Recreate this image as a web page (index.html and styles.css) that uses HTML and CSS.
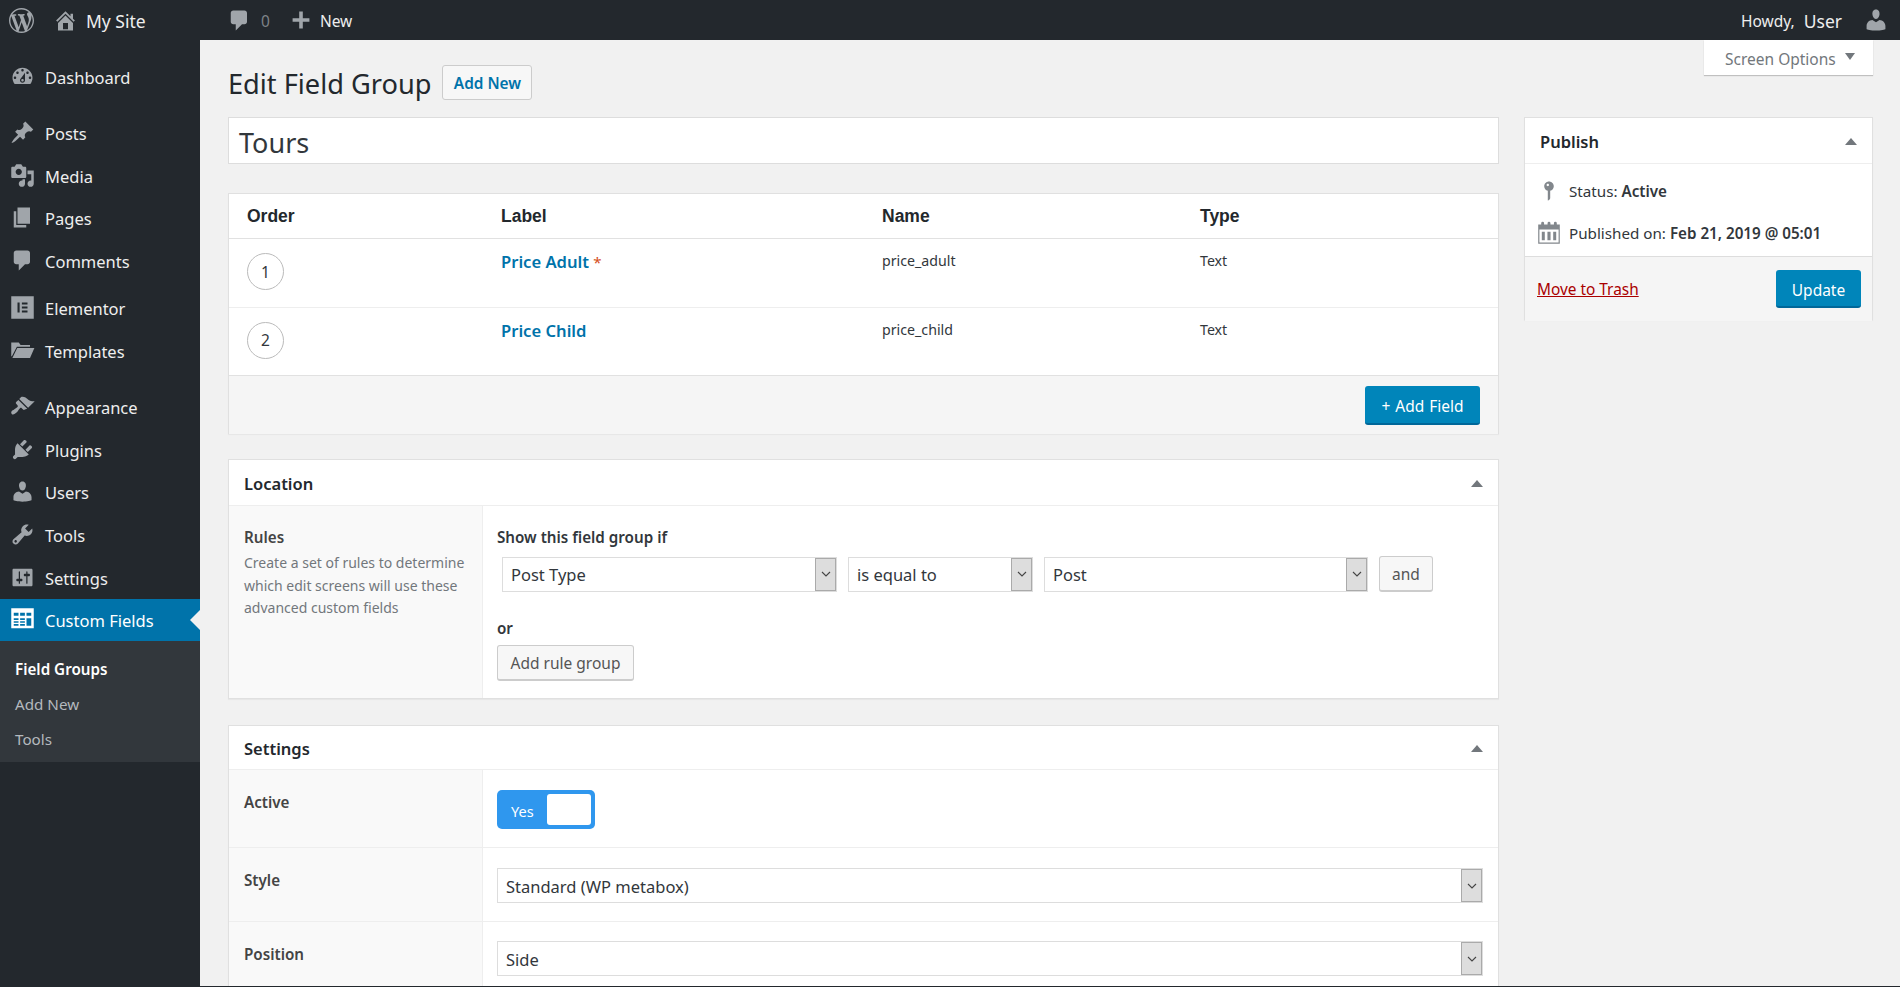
FILE: index.html
```html
<!DOCTYPE html>
<html lang="en">
<head>
<meta charset="utf-8">
<title>Edit Field Group</title>
<link rel="stylesheet" href="styles.css">
</head>
<body>
<header class="bar">
  <svg class="bar-wp" viewBox="0 0 20 20"><path d="M20 10c0-5.51-4.49-10-10-10C4.48 0 0 4.49 0 10c0 5.52 4.48 10 10 10 5.51 0 10-4.48 10-10zM7.78 15.37L4.37 6.22c.55-.02 1.17-.08 1.17-.08.5-.06.44-1.13-.06-1.11 0 0-1.45.11-2.37.11-.18 0-.37 0-.58-.01C4.12 2.69 6.87 1.11 10 1.11c2.33 0 4.45.87 6.05 2.34-.68-.11-1.65.39-1.65 1.58 0 .74.45 1.36.9 2.1.35.61.55 1.36.55 2.46 0 1.49-1.4 5-1.4 5l-3.03-8.37c.54-.02.82-.17.82-.17.5-.05.44-1.25-.06-1.22 0 0-1.44.12-2.38.12-.87 0-2.33-.12-2.33-.12-.5-.03-.56 1.2-.06 1.22l.92.08 1.26 3.41zM17.41 10c.24-.64.74-1.87.43-4.25.7 1.29 1.05 2.71 1.05 4.25 0 3.29-1.73 6.24-4.4 7.78.97-2.59 1.94-5.2 2.92-7.78zM6.1 18.09C3.12 16.65 1.11 13.53 1.11 10c0-1.3.23-2.48.72-3.59C3.25 10.3 4.67 14.2 6.1 18.09zm4.03-6.63l2.58 6.98c-.86.29-1.76.45-2.71.45-.79 0-1.57-.11-2.29-.33.81-2.38 1.62-4.74 2.42-7.1z"/></svg>
  <svg class="bar-home" viewBox="0 0 20 20"><path d="M16 8.5l1.53 1.53-1.06 1.06L10 4.62l-6.47 6.47-1.06-1.06L10 2.5l4 4v-2h2v4zm-6-2.46l6 5.99V18H4v-5.97zM12 17v-5H8v5h4z"/></svg>
  <span class="bar-site">My Site</span>
  <svg class="bar-cmt" viewBox="0 0 20 20"><path d="M5 2h9c1.1 0 2 .9 2 2v7c0 1.1-.9 2-2 2h-2l-5 5v-5H5c-1.1 0-2-.9-2-2V4c0-1.1.9-2 2-2z"/></svg>
  <span class="bar-count">0</span>
  <svg class="bar-plus" viewBox="0 0 20 20"><path d="M17 8.5v3h-5.5V17h-3v-5.5H3v-3h5.5V3h3v5.5z"/></svg>
  <span class="bar-new">New</span>
  <span class="bar-howdy">Howdy,</span>
  <span class="bar-user">User</span>
  <svg class="bar-avatar" viewBox="0 0 20 20"><path d="M10 9.25c-2.27 0-2.73-3.44-2.73-3.44C7 4.02 7.82 2 9.97 2c2.16 0 2.98 2.02 2.71 3.81 0 0-.41 3.44-2.68 3.44zm0 2.57L12.72 10c2.39 0 4.52 2.33 4.52 4.53v2.49s-3.65 1.13-7.24 1.13c-3.65 0-7.24-1.13-7.24-1.13v-2.49c0-2.25 1.94-4.48 4.47-4.48z"/></svg>
</header>
<div class="layout">
  <nav class="side">
    <a class="item"><svg class="ic" viewBox="0 0 20 20"><path d="M3.76 16h12.48c1.1-1.37 1.76-3.11 1.76-5 0-4.42-3.58-8-8-8s-8 3.58-8 8c0 1.89.66 3.63 1.76 5zM10 4c.55 0 1 .45 1 1s-.45 1-1 1-1-.45-1-1 .45-1 1-1zM6 6c.55 0 1 .45 1 1s-.45 1-1 1-1-.45-1-1 .45-1 1-1zm8 0c.55 0 1 .45 1 1s-.45 1-1 1-1-.45-1-1 .45-1 1-1zm-5.37 5.55L12 7v6c0 1.1-.9 2-2 2s-2-.9-2-2c0-.57.24-1.08.63-1.45zM4 10c.55 0 1 .45 1 1s-.45 1-1 1-1-.45-1-1 .45-1 1-1zm12 0c.55 0 1 .45 1 1s-.45 1-1 1-1-.45-1-1 .45-1 1-1zm-5 3c0-.55-.45-1-1-1s-1 .45-1 1 .45 1 1 1 1-.45 1-1z"/></svg>Dashboard</a>
    <a class="item gap"><svg class="ic" viewBox="0 0 20 20"><path d="M10.44 3.02l1.82-1.82 6.36 6.35-1.83 1.82c-1.05-.68-2.48-.57-3.41.36l-.75.75c-.92.93-1.04 2.35-.35 3.41l-1.83 1.82-2.41-2.41-2.8 2.79c-.42.42-3.38 2.71-3.8 2.29s1.86-3.39 2.28-3.81l2.79-2.79L4.1 9.36l1.83-1.82c1.05.69 2.48.57 3.4-.36l.75-.75c.93-.92 1.05-2.35.36-3.41z"/></svg>Posts</a>
    <a class="item"><svg class="ic" viewBox="0 0 20 20"><path d="M13 11V4c0-.55-.45-1-1-1h-1.67L9 1H5L3.67 3H2c-.55 0-1 .45-1 1v7c0 .55.45 1 1 1h10c.55 0 1-.45 1-1zM7 4.5c1.38 0 2.5 1.12 2.5 2.5S8.38 9.5 7 9.5 4.5 8.38 4.5 7 5.62 4.5 7 4.5zM14 6h5v10.5c0 1.38-1.12 2.5-2.5 2.5S14 17.88 14 16.5s1.12-2.5 2.5-2.5c.17 0 .34.02.5.05V9h-3V6zm-4 8.05V13h2v3.5c0 1.38-1.12 2.5-2.5 2.5S7 17.88 7 16.5 8.12 14 9.5 14c.17 0 .34.02.5.05z"/></svg>Media</a>
    <a class="item"><svg class="ic" viewBox="0 0 20 20"><path d="M6 15V2h10v13H6zm-1 1h8v2H3V5h2v11z"/></svg>Pages</a>
    <a class="item"><svg class="ic" viewBox="0 0 20 20"><path d="M5 2h9c1.1 0 2 .9 2 2v7c0 1.1-.9 2-2 2h-2l-5 5v-5H5c-1.1 0-2-.9-2-2V4c0-1.1.9-2 2-2z"/></svg>Comments</a>
    <a class="item gap-s"><svg class="ic" viewBox="0 0 20 20"><path fill-rule="evenodd" d="M1 1h18v18H1zM6 6v8h1.7V6zM9.5 6v1.6h4.5V6zM9.5 9.2v1.6h4.5V9.2zM9.5 12.4V14h4.5v-1.6z"/></svg>Elementor</a>
    <a class="item"><svg class="ic" viewBox="0 0 20 20"><path d="M1 3.5h6l1.5 2H16v1.5H5.5L1.5 14.5H1zM5.8 8H19.5L16 16H1.9z"/></svg>Templates</a>
    <a class="item gap"><svg class="ic" viewBox="0 0 20 20"><path d="M14.48 11.06L7.41 3.99l1.5-1.5c.5-.56 2.3-.47 3.51.32 1.21.8 1.43 1.28 2.91 2.1 1.18.64 2.45 1.26 4.45.85zm-.71.71L6.7 4.7 4.93 6.47c-.39.39-.39 1.02 0 1.41l1.06 1.06c.39.39.39 1.03 0 1.42-.6.6-1.43 1.11-2.21 1.69-.35.26-.7.53-1.01.84C1.43 13.23.4 14.95 1.4 15.95s2.71-.03 4.05-1.37c.31-.31.58-.66.84-1.01.58-.78 1.09-1.61 1.69-2.21.39-.39 1.02-.39 1.41 0l1.06 1.06c.39.39 1.02.39 1.41 0z"/></svg>Appearance</a>
    <a class="item"><svg class="ic" viewBox="0 0 20 20"><path d="M13.11 4.36L9.87 7.6 8 5.73l3.24-3.24c.35-.34 1.05-.2 1.56.32.52.51.66 1.21.31 1.55zm-8 1.77l.91-1.12 9.01 9.01-1.19.84c-.71.71-2.63 1.16-3.82 1.16H6.14L4.9 17.26c-.59.59-1.54.59-2.12 0-.59-.58-.59-1.53 0-2.12l1.24-1.24v-3.88c0-1.13.4-3.19 1.09-3.89zm7.26 3.97l3.24-3.24c.34-.35 1.04-.21 1.55.31.52.51.66 1.21.31 1.55l-3.24 3.25z"/></svg>Plugins</a>
    <a class="item"><svg class="ic" viewBox="0 0 20 20"><path d="M10 9.25c-2.27 0-2.73-3.44-2.73-3.44C7 4.02 7.82 2 9.97 2c2.16 0 2.98 2.02 2.71 3.81 0 0-.41 3.44-2.68 3.44zm0 2.57L12.72 10c2.39 0 4.52 2.33 4.52 4.53v2.49s-3.65 1.13-7.24 1.13c-3.65 0-7.24-1.13-7.24-1.13v-2.49c0-2.25 1.94-4.48 4.47-4.48z"/></svg>Users</a>
    <a class="item"><svg class="ic" viewBox="0 0 20 20"><path d="M16.68 9.77c-1.34 1.34-3.3 1.67-4.95.99l-5.41 6.52c-.99.99-2.59.99-3.58 0s-.99-2.59 0-3.57l6.52-5.42c-.68-1.65-.35-3.61.99-4.95 1.28-1.28 3.12-1.62 4.72-1.06l-2.89 2.89 2.82 2.82 2.86-2.87c.53 1.58.18 3.39-1.08 4.65zM3.81 16.21c.4.39 1.04.39 1.43 0 .4-.4.4-1.04 0-1.43-.39-.4-1.03-.4-1.43 0-.39.39-.39 1.03 0 1.43z"/></svg>Tools</a>
    <a class="item"><svg class="ic" viewBox="0 0 20 20"><path d="M18 16V4c0-.55-.45-1-1-1H3c-.55 0-1 .45-1 1v12c0 .55.45 1 1 1h14c.55 0 1-.45 1-1zM8 11h1c.55 0 1 .45 1 1s-.45 1-1 1H8v1.5c0 .28-.22.5-.5.5s-.5-.22-.5-.5V13H6c-.55 0-1-.45-1-1s.45-1 1-1h1V5.5c0-.28.22-.5.5-.5s.5.22.5.5V11zm5-2h-1c-.55 0-1-.45-1-1s.45-1 1-1h1V5.5c0-.28.22-.5.5-.5s.5.22.5.5V7h1c.55 0 1 .45 1 1s-.45 1-1 1h-1v5.5c0 .28-.22.5-.5.5s-.5-.22-.5-.5V9z"/></svg>Settings</a>
    <a class="item current"><svg class="ic" viewBox="0 0 20 20"><path fill-rule="evenodd" d="M1 1h18v16H1zM3 4.5v2.4h3.8V4.5zM8.1 4.5v2.4h3.8V4.5zM13.2 4.5v2.4H17V4.5zM3 9v1.3h3.8V9zM3 11.3v1.3h3.8v-1.3zM3 13.6v1.3h3.8v-1.3zM8.1 9v1.3h3.8V9zM8.1 11.3v1.3h3.8v-1.3zM8.1 13.6v1.3h3.8v-1.3zM13.2 9v5.9H17V9z"/></svg>Custom Fields</a>
    <div class="sub">
      <a class="sub-item on">Field Groups</a>
      <a class="sub-item">Add New</a>
      <a class="sub-item">Tools</a>
    </div>
  </nav>
  <main class="main">
    <div class="screen-tab">Screen Options<i class="tri-d"></i></div>
    <div class="head"><h1>Edit Field Group</h1><a class="add-new">Add New</a></div>
    <div class="cols">
      <div class="col">
        <div class="title-box">Tours</div>
        <section class="box fields">
          <div class="frow fhead"><span>Order</span><span>Label</span><span>Name</span><span>Type</span></div>
          <div class="frow"><span><b class="num">1</b></span><span class="lbl"><a>Price Adult</a> <em>*</em></span><span class="mono">price_adult</span><span class="mono">Text</span></div>
          <div class="frow"><span><b class="num">2</b></span><span class="lbl"><a>Price Child</a></span><span class="mono">price_child</span><span class="mono">Text</span></div>
          <div class="ffoot"><a class="btn-p addf">+ Add Field</a></div>
        </section>
        <section class="box loc">
          <div class="box-h"><h2>Location</h2><i class="tri-u"></i></div>
          <div class="fld fld-loc">
            <div class="fld-l"><strong>Rules</strong><p>Create a set of rules to determine which edit screens will use these advanced custom fields</p></div>
            <div class="fld-r">
              <div class="cap">Show this field group if</div>
              <div class="rule">
                <div class="sel s1"><span>Post Type</span><i class="arr"><svg viewBox="0 0 10 6"><path d="M1 1l4 4 4-4"/></svg></i></div>
                <div class="sel s2"><span>is equal to</span><i class="arr"><svg viewBox="0 0 10 6"><path d="M1 1l4 4 4-4"/></svg></i></div>
                <div class="sel s3"><span>Post</span><i class="arr"><svg viewBox="0 0 10 6"><path d="M1 1l4 4 4-4"/></svg></i></div>
                <a class="btn and">and</a>
              </div>
              <div class="cap or">or</div>
              <a class="btn addr">Add rule group</a>
            </div>
          </div>
        </section>
        <section class="box set">
          <div class="box-h"><h2>Settings</h2><i class="tri-u"></i></div>
          <div class="fld row-a">
            <div class="fld-l"><strong>Active</strong></div>
            <div class="fld-r"><div class="toggle"><span>Yes</span><i></i></div></div>
          </div>
          <div class="fld row-b">
            <div class="fld-l"><strong>Style</strong></div>
            <div class="fld-r"><div class="sel full"><span>Standard (WP metabox)</span><i class="arr"><svg viewBox="0 0 10 6"><path d="M1 1l4 4 4-4"/></svg></i></div></div>
          </div>
          <div class="fld row-c">
            <div class="fld-l"><strong>Position</strong></div>
            <div class="fld-r"><div class="sel full"><span>Side</span><i class="arr"><svg viewBox="0 0 10 6"><path d="M1 1l4 4 4-4"/></svg></i></div></div>
          </div>
        </section>
      </div>
      <aside class="col-side">
        <section class="box pub">
          <div class="box-h"><h2>Publish</h2><i class="tri-u"></i></div>
          <div class="pub-b">
            <div class="pub-l"><svg class="pin" viewBox="0 0 20 20"><path d="M14 6c0 1.86-1.28 3.41-3 3.86V16c0 1-2 2-2 2V9.86c-1.72-.45-3-2-3-3.86 0-2.21 1.79-4 4-4s4 1.79 4 4zM8 5c0 .55.45 1 1 1s1-.45 1-1-.45-1-1-1-1 .45-1 1z"/></svg><span>Status: <b>Active</b></span></div>
            <div class="pub-l"><svg class="pin" viewBox="0 0 20 20"><path fill-rule="evenodd" d="M1 3h2.5V1.8a1.2 1.2 0 0 1 2.4 0V3h2.9V1.8a1.2 1.2 0 0 1 2.4 0V3h2.9V1.8a1.2 1.2 0 0 1 2.4 0V3H19v16H1zM2 7v11h16V7zM4 9h2.5v7H4zM8.7 9h2.6v7H8.7zM13.5 9H16v7h-2.5z"/></svg><span>Published on: <b>Feb 21, 2019 @ 05:01</b></span></div>
          </div>
          <div class="pub-f"><a class="trash">Move to Trash</a><a class="btn-p upd">Update</a></div>
        </section>
      </aside>
    </div>
  </main>
</div>
<div class="edge"></div>
</body>
</html>
```

FILE: styles.css
```css
* { box-sizing: border-box; }
html, body { margin: 0; height: 987px; overflow: hidden; }
body { background: #f1f1f1; color: #32373c; font-family: "Noto Sans", "Open Sans", sans-serif; font-size: 15px; }
a { text-decoration: none; }
svg { display: block; }

.bar { height: 40px; background: #23282d; display: flex; align-items: center; color: #eee; font-size: 15.5px; }
.bar span { padding-top: 1px; }
.bar svg { fill: #a0a5aa; flex: none; }
.bar-wp { width: 25px; height: 25px; margin-left: 9px; }
.bar-home { width: 25px; height: 25px; margin-left: 19px; }
.bar-site { margin-left: 8px; font-size: 17.5px; width: 141px; }
.bar-cmt { width: 25px; height: 25px; margin-left: 0; }
.bar-count { margin-left: 9px; color: #7d8287; }
.bar-plus { width: 24px; height: 24px; margin-left: 19px; }
.bar-new { margin-left: 7px; }
.bar-howdy { margin-left: auto; }
.bar-user { margin-left: 9px; font-size: 17.5px; }
.bar-avatar { width: 26px; height: 26px; margin-left: 21px; margin-right: 11px; }

.layout { display: flex; height: 946px; overflow: hidden; }
.edge { height: 1px; background: #23282d; }
.side { width: 200px; flex: none; background: #23282d; padding-top: 15px; }
.item { display: flex; align-items: center; height: 42.7px; color: #eee; font-size: 16.5px; padding: 2px 0 0 10px; position: relative; }
.ic { width: 25px; height: 25px; fill: #a0a5aa; margin: -2px 10px 0 0; flex: none; }
.gap { margin-top: 13.4px; }
.gap-s { margin-top: 4.5px; }
.current { background: #0073aa; color: #fff; height: 42px; }
.current .ic { fill: #fff; }
.current::after { content: ""; position: absolute; right: 0; top: 50%; margin-top: -10px; border: 10px solid transparent; border-right-color: #f1f1f1; border-left-width: 0; }
.sub { background: #32373c; padding: 11px 0 5px; }
.sub-item { display: block; height: 35px; line-height: 35px; padding-left: 15px; font-size: 15.2px; color: #b4b9be; }
.sub-item.on { color: #fff; font-weight: 600; }

.main { position: relative; flex: 1; padding: 25px 27px 0 28px; min-width: 0; }
.screen-tab { position: absolute; right: 27px; top: 0; width: 169px; height: 35px; background: #fff; box-shadow: 0 1px 1px rgba(0,0,0,.2); color: #72777c; font-size: 15.5px; padding: 2px 0 0 21px; display: flex; align-items: center; }
.tri-d { margin-left: 9px; margin-top: -4px; border: 5.5px solid transparent; border-top: 7px solid #72777c; border-bottom-width: 0; }
.tri-u { border: 6px solid transparent; border-bottom: 7px solid #72777c; border-top-width: 0; margin-left: auto; }

.head { display: flex; align-items: center; height: 35px; margin-bottom: 17px; }
h1 { margin: 0; padding-top: 2px; font-size: 27.2px; font-weight: 400; color: #23282d; }
.add-new { margin-left: 11px; width: 90px; height: 35px; padding-top: 2px; display: flex; align-items: center; justify-content: center; background: #f7f7f7; border: 1px solid #ccc; border-radius: 3px; color: #0073aa; font-weight: 600; font-size: 15.4px; }

.cols { display: flex; gap: 25px; align-items: flex-start; }
.col { width: 1271px; flex: none; }
.col-side { width: 349px; flex: none; }
.title-box { height: 47px; background: #fff; border: 1px solid #ddd; font-size: 27px; color: #32373c; padding: 3px 0 0 10px; display: flex; align-items: center; margin-bottom: 29px; }
.box { background: #fff; border: 1px solid #e0e0e0; box-shadow: 0 1px 1px rgba(0,0,0,.04); }

.fields { height: 241px; margin-bottom: 25px; }
.frow { display: grid; grid-template-columns: 254px 381px 318px 1fr; padding-left: 18px; height: 68.5px; border-bottom: 1px solid #eee; }
.fhead { height: 45px; padding-top: 1px; align-items: center; border-bottom: 1px solid #e1e1e1; font-family: "Liberation Sans", Arial, sans-serif; font-weight: 700; font-size: 17.5px; color: #23282d; }
.frow:nth-child(3) { border-bottom-color: #e1e1e1; }
.num { display: flex; width: 37px; height: 37px; margin-top: 14px; align-items: center; justify-content: center; border: 1px solid #bbb; border-radius: 50%; font-weight: 400; font-size: 15.5px; }
.lbl { padding-top: 11px; font-size: 16.6px; }
.lbl a { color: #0073aa; font-weight: 600; }
.lbl em { color: #d54e21; font-style: normal; font-weight: 400; font-size: 15px; }
.mono { padding-top: 12px; font-size: 14.2px; }
.ffoot { height: 58px; background: #f5f5f5; display: flex; justify-content: flex-end; align-items: center; padding-right: 18px; }
.btn-p { display: flex; align-items: center; justify-content: center; padding-top: 3px; background: #0085ba; border-bottom: 2px solid #006799; border-radius: 3px; color: #fff; font-size: 15.5px; word-spacing: 1px; }
.addf { width: 115px; height: 39px; }

.box-h { height: 46px; display: flex; align-items: center; border-bottom: 1px solid #eee; padding: 2px 15px 0; }
.box-h h2 { margin: 0; font-size: 16.5px; font-weight: 600; color: #23282d; }
.loc { height: 239.5px; margin-bottom: 26.5px; }
.set { height: 262px; border-bottom: 0; }
.set .box-h { height: 44px; }
.fld { display: flex; }
.fld-loc { height: 192px; }
.fld-l { width: 254px; flex: none; background: #f9f9f9; border-right: 1px solid #eee; padding: 21px 0 0 15px; font-size: 14px; }
.fld-l strong { font-weight: 600; font-size: 15.2px; color: #444; display: block; line-height: 20px; }
.fld-l p { margin: 5px 0 0; color: #72777c; line-height: 22.5px; }
.fld-r { flex: 1; padding: 21px 14px 0 14px; min-width: 0; }
.cap { font-weight: 600; font-size: 15.2px; line-height: 20px; }
.rule { display: flex; margin-top: 9px; align-items: center; }
.sel { display: flex; align-items: center; background: #fff; border: 1px solid #ddd; height: 35px; font-size: 16.5px; color: #32373c; padding-left: 8px; justify-content: space-between; }
.sel span { padding-top: 2px; }
.rule .sel span { padding-top: 1px; }
.s1 { width: 335px; margin-left: 5px; }
.s2 { width: 185px; margin-left: 11px; }
.s3 { width: 324px; margin-left: 11px; }
.arr { width: 21px; height: 33px; flex: none; background: #ddd; border: 1px solid #aaa; display: flex; align-items: center; justify-content: center; }
.arr svg { width: 10px; height: 6px; fill: none; stroke: #444; stroke-width: 1.1; }
.btn { display: flex; align-items: center; justify-content: center; background: #f7f7f7; border: 1px solid #ccc; border-bottom-width: 2px; border-radius: 3px; color: #555; font-size: 15.5px; }
.and { width: 54px; height: 36px; margin-left: 11px; }
.or { margin-top: 26px; }
.addr { width: 137px; height: 36px; margin-top: 7px; }

.row-a { height: 78px; border-bottom: 1px solid #eee; }
.row-b { height: 74px; border-bottom: 1px solid #eee; }
.row-c { height: 66px; }
.set .fld-l { padding-top: 22px; }
.row-a .fld-r { padding-top: 20px; }
.row-b .fld-r { padding-top: 20px; }
.row-c .fld-r { padding-top: 19px; }
.full { width: 986px; }
.toggle { width: 98px; height: 39px; background: #2f97ee; border-radius: 5px; display: flex; align-items: center; justify-content: space-between; padding: 4px; color: #fff; font-size: 14.5px; }
.toggle span { margin-left: 10px; padding-top: 2px; }
.toggle i { width: 44px; height: 31px; background: #fff; border-radius: 3px; }

.pub { height: 203px; }
.pub-b { height: 93px; padding-top: 13px; border-bottom: 1px solid #ddd; }
.pub-l { display: flex; align-items: center; height: 28px; margin-bottom: 14px; padding-left: 12px; font-size: 15.2px; }
.pin { width: 24px; height: 24px; fill: #82878c; margin-right: 8px; flex: none; }
.pub-l b { font-weight: 600; }
.pub-f { height: 64px; background: #f5f5f5; display: flex; align-items: center; justify-content: space-between; padding: 0 11px 0 12px; }
.trash { color: #a00; text-decoration: underline; font-size: 15.4px; }
.upd { width: 85px; height: 38px; }
```
